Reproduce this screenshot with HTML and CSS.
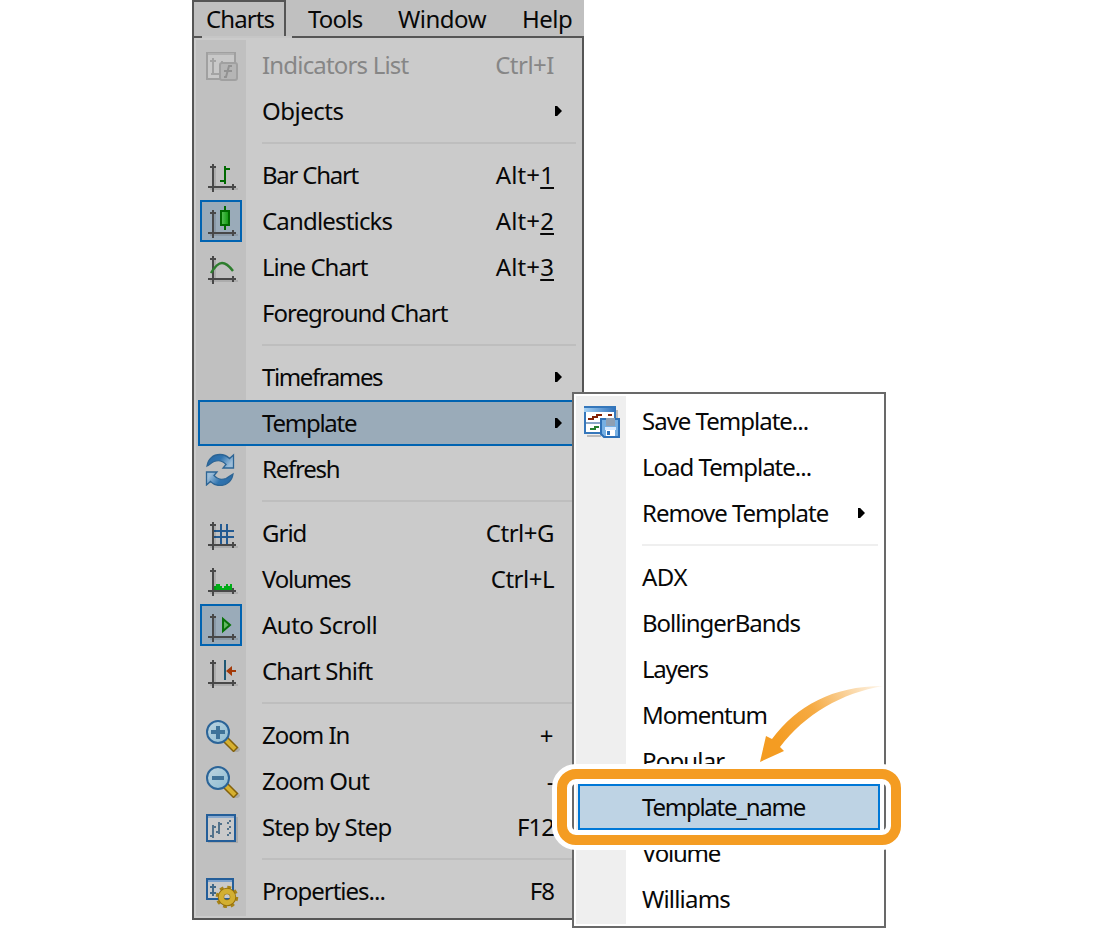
FILE: index.html
```html
<!DOCTYPE html>
<html lang="en">
<head>
<meta charset="utf-8">
<title>Charts menu</title>
<link rel="stylesheet" href="styles.css">
</head>
<body>
<svg class="defs" aria-hidden="true">
  <defs>
    <linearGradient id="candle" x2="1"><stop stop-color="#5cc45c"/><stop offset="1" stop-color="#0b960b"/></linearGradient>
    <linearGradient id="blue" x2="1" y2=".4"><stop stop-color="#2a68a3"/><stop offset=".55" stop-color="#2f74b0"/><stop offset="1" stop-color="#9bbcd8"/></linearGradient>
    <linearGradient id="lens" x2="1" y2="1"><stop stop-color="#bfd5df"/><stop offset="1" stop-color="#8bbbd3"/></linearGradient>
    <linearGradient id="gold" x2="1" y2="1"><stop stop-color="#e2c43d"/><stop offset="1" stop-color="#b58411"/></linearGradient>
    <linearGradient id="bar" x2="1"><stop stop-color="#a6d2f5"/><stop offset="1" stop-color="#2e70bb"/></linearGradient>
    <linearGradient id="swoosh" gradientUnits="userSpaceOnUse" x1="120" y1="0" x2="20" y2="60"><stop stop-color="#f49c22" stop-opacity=".1"/><stop offset=".6" stop-color="#f49c22" stop-opacity=".85"/><stop offset="1" stop-color="#f49c22"/></linearGradient>
    <g id="axes"><path d="M10 10h2v18h-2zM6 30h28v2H6z" fill="#000" opacity=".1"/><path d="M8 6h2v28h-2zM6 8h6v2h-6zM4 28h28v2h-28zM28 26h2v6h-2z" fill="#484848"/></g>
    <g id="magnifier">
      <path d="M21 21l11 11" stroke="#777" stroke-opacity=".3" stroke-width="7" transform="translate(2 2)"/>
      <path d="M20 20l12 12" stroke="#84620b" stroke-width="7"/>
      <path d="M21 21l10 10" stroke="#d6b030" stroke-width="4"/>
      <circle cx="14" cy="14" r="11" fill="url(#lens)" stroke="#2b6498" stroke-width="2"/>
    </g>
  </defs>
</svg>

<div class="stage">
  <nav class="menubar">
    <span class="tab active">Charts</span><span class="tab tools">Tools</span><span class="tab window">Window</span><span class="tab help">Help</span>
  </nav>

  <ul class="menu main">
    <li class="row disabled"><span class="icon"><svg viewBox="0 0 36 34"><rect x="3" y="5" width="28" height="26" fill="#c8c8c8" stroke="#a0a0a0" stroke-width="2"/><path d="M4 6h26" stroke="#b0b0b0" stroke-width="2"/><path d="M9 10v15M6 13h6M7 26h8M18 13v2" stroke="#a3a3a3" stroke-width="2"/><rect x="16" y="15" width="17" height="17" rx="2" fill="#b5b5b5" stroke="#a0a0a0" stroke-width="2"/><path d="M28 18h-3l-3 11h-2M20 23h8" fill="none" stroke="#929292" stroke-width="2"/></svg></span><span class="label near">Indicators List</span><span class="key">Ctrl+I</span></li>
    <li class="row"><span class="icon"></span><span class="label">Objects</span><i class="arrow"></i></li>
    <li class="sep"></li>
    <li class="row"><span class="icon"><svg viewBox="0 0 36 34"><use href="#axes"/><path d="M20 8h2v2h4v2h-4v14h-2v-2h-4v-2h4z" fill="#006900"/></svg></span><span class="label tight">Bar Chart</span><span class="key wide">Alt+<u>1</u></span></li>
    <li class="row"><span class="icon checked"><svg viewBox="0 0 36 34"><use href="#axes"/><path d="M20 2h2v24h-2z" fill="#006900"/><rect x="17" y="7" width="8" height="14" fill="url(#candle)" stroke="#006900" stroke-width="2"/></svg></span><span class="label near">Candlesticks</span><span class="key wide">Alt+<u>2</u></span></li>
    <li class="row"><span class="icon"><svg viewBox="0 0 36 34"><use href="#axes"/><path d="M7 23q6-10 11-10t11 8" fill="none" stroke="#2d7d2d" stroke-width="2.4"/></svg></span><span class="label snug">Line Chart</span><span class="key wide">Alt+<u>3</u></span></li>
    <li class="row"><span class="icon"></span><span class="label snug">Foreground Chart</span></li>
    <li class="sep"></li>
    <li class="row"><span class="icon"></span><span class="label tighter">Timeframes</span><i class="arrow"></i></li>
    <li class="row selected"><span class="icon"></span><span class="label tight">Template</span><i class="arrow"></i></li>
    <li class="row"><span class="icon"><svg viewBox="0 0 36 34"><path id="sweep" d="M3 14C4 7 9 2.5 16 2.5C20 2.5 23 4 25.5 6.5L29.500 3V16H19L22 12.500C19 9 14 8 10 9.500C7 11 5 13 3 14Z" fill="url(#blue)" stroke="#2c6494" stroke-width="1.3"/><use href="#sweep" transform="rotate(180 16 18)"/></svg></span><span class="label tight">Refresh</span></li>
    <li class="sep"></li>
    <li class="row"><span class="icon"><svg viewBox="0 0 36 34"><path d="M17 8v20M23 8v20M10 15h20M10 21h20" stroke="#225a92" stroke-width="2"/><use href="#axes"/></svg></span><span class="label snug">Grid</span><span class="key">Ctrl+G</span></li>
    <li class="row"><span class="icon"><svg viewBox="0 0 36 34"><path d="M10 28v-4h2v-2h4v2h2v2h2v-2h2v-2h2v2h2v-2h2v6z" fill="#00ac17"/><use href="#axes"/></svg></span><span class="label tight">Volumes</span><span class="key">Ctrl+L</span></li>
    <li class="row"><span class="icon checked"><svg viewBox="0 0 36 34"><use href="#axes"/><path d="M19 11v12l7-6z" fill="#62b862" stroke="#087108" stroke-width="2"/></svg></span><span class="label">Auto Scroll</span></li>
    <li class="row"><span class="icon"><svg viewBox="0 0 36 34"><use href="#axes"/><path d="M20 6h2v20h-2z" fill="#1d5875"/><path d="M22 17l6-5v4h4v2h-4v4z" fill="#a33908"/></svg></span><span class="label near">Chart Shift</span></li>
    <li class="sep"></li>
    <li class="row"><span class="icon"><svg viewBox="0 0 36 34"><use href="#magnifier"/><path d="M12 8h4v4h5v4h-5v5h-4v-5H7v-4h5z" fill="#3f7399"/></svg></span><span class="label snug">Zoom In</span><span class="key plus">+</span></li>
    <li class="row"><span class="icon"><svg viewBox="0 0 36 34"><use href="#magnifier"/><path d="M8 12h12v4H8z" fill="#3f7399"/></svg></span><span class="label near">Zoom Out</span><span class="key">-</span></li>
    <li class="row"><span class="icon"><svg viewBox="0 0 36 34"><path d="M4 32h29V7" fill="none" stroke="#aaa" stroke-width="2"/><rect x="3" y="5" width="28" height="26" fill="#cacaca" stroke="#245e99" stroke-width="2"/><path d="M4 7h26" stroke="#88a9ce" stroke-width="2"/><path d="M9 15v13M6 26h3M9 17h3M15 12v12M12 22h3M15 14h3" stroke="#52728b" stroke-width="2"/><path d="M26 10v18M24 12v16" stroke="#52728b" stroke-width="2" stroke-dasharray="2 4"/></svg></span><span class="label near">Step by Step</span><span class="key snug">F12</span></li>
    <li class="sep"></li>
    <li class="row"><span class="icon"><svg viewBox="0 0 36 34"><rect x="3" y="5" width="26" height="20" fill="#cacaca" stroke="#245e99" stroke-width="2"/><path d="M4 7h24" stroke="#7ba1cc" stroke-width="2"/><path d="M9 10v12M6 13h6M6 19h6" stroke="#426989" stroke-width="2"/><circle cx="23" cy="23" r="9.5" fill="none" stroke="#a78317" stroke-width="3.500" stroke-dasharray="3.7 3.76"/><circle cx="23" cy="23" r="6" fill="none" stroke="#96710d" stroke-width="6.500"/><circle cx="23" cy="23" r="5.800" fill="none" stroke="#d2af32" stroke-width="5"/></svg></span><span class="label snug">Properties...</span><span class="key snug">F8</span></li>
  </ul>

  <ul class="menu sub">
    <li class="row"><span class="icon"><svg viewBox="0 0 36 34"><path d="M3 32h14M33 6v8" stroke="#bbb" stroke-width="2"/><rect x="1" y="3" width="30" height="26" fill="#fff" stroke="#3577bb" stroke-width="2"/><path d="M0 2h32v6H0z" fill="url(#bar)"/><path d="M0 3h32" stroke="#3577bb" stroke-width="2"/><path d="M4 15h5v-2h4v-2h5M24 11h4" fill="none" stroke="#842206" stroke-width="2"/><path d="M2 19h15" stroke="#8ba7c6" stroke-width="2"/><path d="M6 25h5v-2h4" fill="none" stroke="#27802f" stroke-width="2"/><path d="M17 15h18v18H20l-3-3z" fill="#76afe2" stroke="#2d70b7" stroke-width="2"/><path d="M22 14h9v8h-9z" fill="#8fa0b3"/><path d="M21 23h11v3H21z" fill="#d8eaff"/><path d="M22 26h9v6h-9z" fill="#fff"/><path d="M23 27h3v4h-3z" fill="#2d70b7"/></svg></span><span class="label snug">Save Template...</span></li>
    <li class="row"><span class="icon"></span><span class="label snug">Load Template...</span></li>
    <li class="row"><span class="icon"></span><span class="label snug">Remove Template</span><i class="arrow"></i></li>
    <li class="sep"></li>
    <li class="row"><span class="icon"></span><span class="label">ADX</span></li>
    <li class="row"><span class="icon"></span><span class="label snug">BollingerBands</span></li>
    <li class="row"><span class="icon"></span><span class="label tight">Layers</span></li>
    <li class="row"><span class="icon"></span><span class="label snug">Momentum</span></li>
    <li class="row"><span class="icon"></span><span class="label near">Popular</span></li>
    <li class="row selected"><span class="icon"></span><span class="label tight">Template_name</span></li>
    <li class="row"><span class="icon"></span><span class="label tight">Volume</span></li>
    <li class="row"><span class="icon"></span><span class="label near">Williams</span></li>
  </ul>

  <svg class="ring" viewBox="0 0 354 86"><rect x="10" y="10" width="334" height="66" rx="14" fill="none" stroke="#fff" stroke-width="20"/><rect x="10" y="10" width="334" height="66" rx="14" fill="none" stroke="#f49c22" stroke-width="10"/></svg>
  <svg class="swoosh" viewBox="0 0 124 80"><path d="M0 77L6 51L12 54C37 21 72 1 123 1C82 8 45 29 20 62L24 66Z" fill="url(#swoosh)"/></svg>
</div>
</body>
</html>
```
FILE: styles.css
```css
* { box-sizing: border-box; }
body {
  margin: 0;
  background: #fff;
  color: #080808;
  font: 24px/46px "Noto Sans", "Open Sans", sans-serif;
  letter-spacing: -0.5px;
}
.defs { position: absolute; width: 0; height: 0; }
.stage { position: relative; width: 1100px; height: 928px; overflow: hidden; }
.menubar {
  display: flex;
  width: 392px;
  height: 36px;
  margin-left: 192px;
  background: #c0c0c0;
  line-height: 38px;
}
.tab { white-space: nowrap; }
.tab.active {
  width: 94px;
  padding-left: 12px;
  border: 2px solid #555;
  border-bottom: 0;
  line-height: 34px;
  letter-spacing: -0.9px;
}
.tools { width: 90px; margin-left: 22px; letter-spacing: -0.8px; }
.window { width: 124px; }
.menu { margin: 0; padding: 0; list-style: none; }
.main {
  width: 392px;
  height: 884px;
  margin-left: 192px;
  padding: 4px 6px 0 4px;
  border: 2px solid #555;
  background: linear-gradient(#c0c0c0, #c0c0c0) 2px 2px / 50px 876px no-repeat #cbcbcb;
}
.main::before {
  content: "";
  position: absolute;
  left: 202px;
  top: 36px;
  width: 90px;
  height: 2px;
  background: #c6c6c6;
}
.sub {
  position: absolute;
  left: 572px;
  top: 392px;
  width: 314px;
  height: 536px;
  padding: 4px;
  border: 2px solid #696969;
  background: linear-gradient(#efefef, #efefef) 2px 2px / 50px 528px no-repeat #fff;
}
.row { display: flex; height: 46px; padding-right: 18px; }
.icon {
  display: flex;
  flex: none;
  align-items: center;
  width: 42px;
  height: 42px;
  margin: 2px 20px 2px 2px;
  padding-left: 4px;
}
.icon svg { flex: none; width: 36px; height: 34px; }
.checked {
  padding-left: 2px;
  border: 2px solid #0063b1;
  background: #9aabb9;
}
.label { flex: 1; white-space: nowrap; }
.key { white-space: nowrap; margin-right: 4px; }
.near { letter-spacing: -0.82px; }
.snug { letter-spacing: -1px; }
.tight { letter-spacing: -1.25px; }
.tighter { letter-spacing: -1.4px; }
.wide { letter-spacing: 0.1px; }
.plus { margin-right: 5px; line-height: 48px; }
u { text-decoration-thickness: 2px; text-underline-offset: 3px; }
.disabled { color: #868686; }
.sep {
  height: 18px;
  margin-left: 64px;
  padding-top: 8px;
}
.sep::before { content: ""; display: block; height: 2px; background: #bebebe; }
.sub .sep { margin-right: 2px; }
.sub .sep::before { background: #efefef; }
.arrow {
  width: 7px;
  height: 10px;
  margin: 18px -4px 0 0;
  background: #000;
  clip-path: polygon(0 0, 30% 0, 100% 50%, 30% 100%, 0 100%);
}
.sub .arrow { margin-right: -3px; }
.selected { border: 2px solid #0063b1; background: #9aabb9; line-height: 42px; }
.main .selected { margin-right: -8px; padding-right: 24px; }
.selected .icon { margin: 0 20px 0 0; }
.selected .arrow { margin-top: 16px; }
.sub .selected { border-color: #0078d7; background: #bed3e4; }
.ring { position: absolute; left: 552px; top: 764px; width: 354px; height: 86px; }
.swoosh { position: absolute; left: 760px; top: 685px; width: 124px; height: 80px; }
```
